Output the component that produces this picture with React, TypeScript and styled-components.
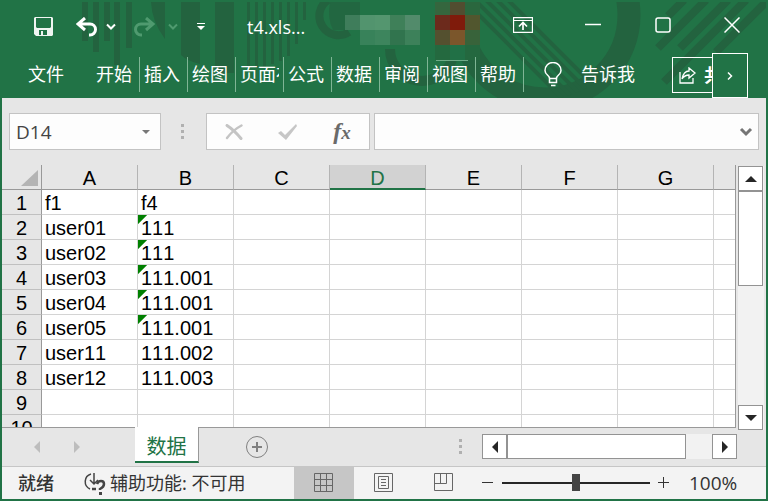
import React from "react";
import styled, { createGlobalStyle } from "styled-components";

const GREEN = "#217346";
const UI = `"Open Sans", "Noto Sans CJK SC", sans-serif`;
const CJK = `"Noto Sans", "Noto Sans CJK SC", sans-serif`;

const Global = createGlobalStyle`
  * { box-sizing: border-box; }
  body { margin: 0; background: #e6e6e6; }
  button, input { font: inherit; color: inherit; padding: 0; margin: 0; border: 0; background: none; }
  button { cursor: pointer; }
`;

const Window = styled.main`
  display: flex;
  flex-direction: column;
  height: 100vh;
  border: 2px solid ${GREEN};
  border-top: 0;
  background: #e6e6e6;
  font-family: ${CJK};
  overflow: hidden;
`;

const Header = styled.header`
  position: relative;
  flex: none;
  background: ${GREEN};
  color: #fff;
  overflow: hidden;
`;

const Pattern = styled.svg`
  position: absolute;
  left: -2px;
  top: 0;
`;

const TitleBar = styled.div`
  position: relative;
  display: flex;
  align-items: center;
  height: 53px;
  padding-left: 31px;
`;

const IconButton = styled.button<{ $w: number; $gap?: number; $faded?: boolean }>`
  display: flex;
  align-items: center;
  justify-content: center;
  flex: none;
  width: ${(p) => p.$w}px;
  height: 32px;
  margin-left: ${(p) => p.$gap ?? 0}px;
  color: ${(p) => (p.$faded ? "#4f9a6f" : "#fff")};
`;

const Title = styled.h1`
  flex: 1;
  margin: 0 0 0 23px;
  padding-top: 1px;
  font: 400 18px/24px ${UI};
  white-space: nowrap;
`;

const WindowButtons = styled.div`
  display: flex;
  align-self: flex-start;
  padding-top: 9px;
`;

const Ribbon = styled.nav`
  position: relative;
  display: flex;
  align-items: flex-start;
  height: 45px;
  padding-top: 4px;
  font-size: 18px;
  line-height: 35px;
`;

const FileTab = styled.button`
  width: 90px;
  height: 35px;
  padding-right: 2px;
  text-align: center;
`;

const RibbonTab = styled.button<{ $current?: boolean }>`
  flex: none;
  width: 48px;
  height: 35px;
  padding: 0 4px;
  border-right: 1px solid #7fb595;
  background: ${(p) =>
    p.$current ? "linear-gradient(#6fab88, #6fab88) 8px 3px / 32px 1px no-repeat" : "none"};
  overflow: hidden;
  white-space: nowrap;
  text-align: left;
`;

const ClipText = styled.span`
  display: block;
  overflow: hidden;
`;

const TellMe = styled.button`
  display: flex;
  align-items: center;
  gap: 19px;
  height: 35px;
  margin-left: 20px;
  white-space: nowrap;
`;

const ShareGroup = styled.div`
  display: flex;
  align-items: flex-start;
  margin: -4px 18px 0 auto;
`;

const Share = styled.button`
  display: flex;
  align-items: center;
  justify-content: flex-start;
  gap: 7px;
  width: 40px;
  height: 36px;
  margin-top: 4px;
  padding-left: 6px;
  border: 1px solid #fff;
  border-right: 0;
  overflow: hidden;
  white-space: nowrap;
  font-weight: 700;

  & > * {
    flex: none;
  }
`;

const More = styled.button`
  display: flex;
  align-items: center;
  justify-content: center;
  width: 36px;
  height: 45px;
  border: 1px solid #fff;
`;

const FormulaBar = styled.div`
  display: flex;
  align-items: center;
  flex: none;
  height: 67px;
  padding: 0 7px;
`;

const Box = styled.div`
  display: flex;
  align-items: center;
  height: 37px;
  border: 1px solid #c3c3c3;
  background: #fdfdfd;
`;

const NameBox = styled(Box)`
  width: 152px;
`;

const NameInput = styled.input`
  width: 127px;
  height: 35px;
  padding-left: 6px;
  color: #444;
  font: 400 19px/24px ${UI};
`;

const Grip = styled.svg`
  flex: none;
`;

const Functions = styled(Box)`
  width: 164px;
  margin-right: 4px;
`;

const Fx = styled.span`
  color: #6a6a6a;
  font: italic 700 24px/32px "Liberation Serif", "Times New Roman", serif;

  small {
    font-size: 19px;
  }
`;

const FormulaBox = styled(Box)`
  flex: 1;
`;

const FormulaInput = styled.input`
  flex: 1;
  min-width: 0;
  height: 35px;
`;

const Body = styled.div`
  display: grid;
  grid-template-columns: minmax(0, 1fr) 30px;
  flex: 1;
  min-height: 0;
`;

const Sheet = styled.div`
  overflow: hidden;
  border-bottom: 1px solid #999;
  border-right: 1px solid #999;
  background: linear-gradient(#e6e6e6 24px, #fff 24px);
`;

const Table = styled.table`
  width: 100%;
  table-layout: fixed;
  border-collapse: separate;
  border-spacing: 0;
  font: 400 20px/22px "Liberation Sans", Arial, sans-serif;
  font-kerning: none;
  color: #000;
`;

const Corner = styled.th`
  width: 40px;
  height: 25px;
  padding: 0;
  border-bottom: 1px solid #999;
  border-right: 1px solid #999;
  background: #e6e6e6;
`;

const ColHead = styled.th<{ $active?: boolean; $last?: boolean }>`
  width: ${(p) => (p.$last ? "auto" : "96px")};
  height: 25px;
  padding: ${(p) => (p.$active ? 3 : 2)}px 0 0;
  font-weight: 400;
  line-height: ${(p) => (p.$active ? 20 : 22)}px;
  color: ${(p) => (p.$active ? GREEN : "#000")};
  background: ${(p) => (p.$active ? "#d2d2d2" : "#e6e6e6")};
  border-bottom: ${(p) => (p.$active ? `2px solid ${GREEN}` : "1px solid #999")};
  border-right: ${(p) => (p.$last ? "0" : "1px solid #b4b4b4")};
`;

const RowHead = styled.th`
  height: 25px;
  padding: 2px 0 0;
  font-weight: 400;
  background: #e6e6e6;
  border-right: 1px solid #999;
  border-bottom: 1px solid #c0c0c0;
`;

const Cell = styled.td<{ $flag?: boolean }>`
  height: 25px;
  padding: 2px 3px 0;
  white-space: nowrap;
  border-right: 1px solid #d4d4d4;
  border-bottom: 1px solid #d4d4d4;
  background: ${(p) =>
    p.$flag ? "linear-gradient(135deg, #008000 6px, #fff 7px)" : "#fff"};

  &:last-child {
    border-right: 0;
  }
`;

const VScroll = styled.div`
  display: flex;
  flex-direction: column;
  width: 26px;
  margin: 1px 0 -2px 2px;
  background: #f2f2f2;
`;

const ScrollButton = styled.button`
  display: flex;
  align-items: center;
  justify-content: center;
  flex: none;
  width: 25px;
  height: 25px;
  border: 1px solid #939393;
  background: #fff;
`;

const VThumb = styled.div`
  width: 25px;
  height: 95px;
  margin-bottom: auto;
  border: 1px solid #939393;
  background: #fff;
`;

const SheetBar = styled.div`
  display: flex;
  align-items: flex-start;
  flex: none;
  height: 39px;
  border-bottom: 1px solid #c6c6c6;
`;

const SheetNav = styled.div`
  display: flex;
  align-items: center;
  gap: 28px;
  width: 133px;
  height: 38px;
  padding-left: 29px;
`;

const NavButton = styled.button`
  display: flex;
`;

const SheetTab = styled.button`
  width: 64px;
  height: 36px;
  margin-top: -1px;
  padding-top: 5px;
  border-right: 1px solid #999;
  border-bottom: 2px solid ${GREEN};
  background: #fff;
  color: ${GREEN};
  font-size: 20px;
  line-height: 28px;
  z-index: 1;
`;

const AddSheet = styled.button`
  display: flex;
  margin: 7px auto 0 46px;
`;

const HScroll = styled.div`
  display: flex;
  width: 255px;
  height: 25px;
  margin: 6px 29px 0 20px;
  background: #f2f2f2;
`;

const HThumb = styled.div`
  width: 179px;
  margin-right: auto;
  border: 1px solid #939393;
  background: #fff;
`;

const StatusBar = styled.footer`
  display: flex;
  align-items: center;
  flex: none;
  height: 32px;
  background: #f3f3f3;
  color: #333;
  font-size: 18px;
  line-height: 32px;
  white-space: nowrap;
`;

const Ready = styled.span`
  width: 82px;
  padding-left: 16px;
  font-weight: 500;
`;

const Accessibility = styled.button`
  display: flex;
  align-items: center;
  gap: 3px;
  height: 32px;
`;

const Views = styled.div`
  display: flex;
  margin: 0 8px 0 auto;
`;

const ViewButton = styled.button<{ $on?: boolean }>`
  display: flex;
  align-items: center;
  justify-content: center;
  width: 60px;
  height: 32px;
  background: ${(p) => (p.$on ? "#c6c6c6" : "transparent")};
`;

const ZoomButton = styled.button`
  display: flex;
  width: 12px;
`;

const ZoomRange = styled.input`
  appearance: none;
  width: 148px;
  height: 18px;
  margin: 0 8px;

  &::-webkit-slider-runnable-track {
    height: 2px;
    background: #262626;
  }
  &::-webkit-slider-thumb {
    appearance: none;
    width: 8px;
    height: 17px;
    margin-top: -8px;
    background: #444;
  }
`;

const Percent = styled.output`
  width: 77px;
  margin-left: 19px;
  font: 400 19px/32px ${UI};
`;

const tabs = ["开始", "插入", "绘图", "页面布局", "公式", "数据", "审阅", "视图", "帮助"];
const columns = ["A", "B", "C", "D", "E", "F", "G", ""];
const rows: string[][] = [
  ["f1", "f4"],
  ["user01", "111"],
  ["user02", "111"],
  ["user03", "111.001"],
  ["user04", "111.001"],
  ["user05", "111.001"],
  ["user11", "111.002"],
  ["user12", "111.003"],
  [],
  [],
];
const isTextNumber = (row: number, col: number) => col === 1 && row >= 1 && row <= 5;

const mosaic: [number, number, string][] = [
  [345, 15, "#3f7d5b"], [360, 15, "#52946e"], [375, 15, "#54966f"], [390, 15, "#3f8059"], [405, 15, "#528b6b"],
  [360, 30, "#38825a"], [375, 30, "#3d855d"], [390, 30, "#31744e"], [405, 30, "#3d815a"],
  [435, 0, "#35663e"], [450, 0, "#514d30"], [465, 0, "#2a673e"],
  [435, 15, "#6c2a1c"], [450, 15, "#7f1b0b"], [465, 15, "#51562e"],
  [435, 30, "#54502f"], [450, 30, "#7b562b"], [465, 30, "#38633a"],
  [435, 45, "#24693f"], [450, 45, "#217046"], [465, 45, "#24683f"],
];

function HeaderPattern() {
  return (
    <Pattern width="768" height="98" viewBox="0 0 768 98" aria-hidden="true">
      <clipPath id="below-edge"><rect x="0" y="2" width="766" height="96" /></clipPath>
      <clipPath id="disc"><circle cx="545" cy="15" r="84" /></clipPath>
      <g clipPath="url(#below-edge)">
        <g fill="#23633f">
          <path d="M82 2h6v39h-6zM93 2h6v50h-6zM104 2h6v39h-6zM114 2h6v63h-6zM126 2h6v46h-6z" />
          <path d="M151 2h14v37Q152 22 151 2zM181 2h19v62Q187 61 181 55zM215 2h19v71h-16l-3-1z" />
          <path d="M247 2h3v66h-3zM255 2h3v66h-3zM263 2h3v65h-3zM271 2h3v62h-3zM279 2h3v59h-3zM287 2h3v54h-3zM295 2h3v42h-3zM303 2h3v18h-3z" />
          <path d="M330 2h30v13h-15v15h-12q-6-12-3-28z" opacity=".7" />
        </g>
        <g fill="none" stroke="#23633f">
          <path d="M328 0A19 19 0 0 0 349 32" strokeWidth="8" />
          <path d="M390 49A32 32 0 0 0 452 60" strokeWidth="10" />
          <circle cx="545" cy="15" r="84" strokeWidth="23" />
          <path clipPath="url(#disc)" d="M454 -10l110 110M465 -10l110 110M476 -10l110 110M487 -10l110 110M498 -10l110 110" strokeWidth="4" />
          <path d="M668 16L684 0M658 48L706 0M680 48L728 0M664 82L746 0M716 52L768 0" strokeWidth="8" />
        </g>
      </g>
      {mosaic.map(([x, y, c]) => (
        <rect key={`${x}-${y}`} x={x} y={y || 2} width="15" height={y ? 15 : 13} fill={c} />
      ))}
    </Pattern>
  );
}

const stroke = { fill: "none", stroke: "currentColor" } as const;

const Chevron = () => (
  <svg width="10" height="8" viewBox="0 0 10 8" {...stroke} strokeWidth="2"><path d="M1 1.5l4 4 4-4" /></svg>
);

const Arrow = ({ d, color = "#262626" }: { d: "up" | "down" | "left" | "right"; color?: string }) => {
  const paths = { up: "M0 9L6 3L12 9z", down: "M0 3L6 9L12 3z", left: "M9 0L3 6L9 12z", right: "M3 0L9 6L3 12z" };
  return <svg width="12" height="12" viewBox="0 0 12 12"><path d={paths[d]} fill={color} /></svg>;
};

const GripDots = ({ width }: { width: number }) => (
  <Grip width={width} height="16" viewBox={`0 0 ${width} 16`} fill="#b0b0b0" aria-hidden="true">
    {[0, 6, 12].map((y) => <rect key={y} x={Math.floor(width / 2) - 2} y={y} width="3" height="3" />)}
  </Grip>
);

export default function App() {
  return (
    <>
      <Global />
      <Window>
        <Header>
          <HeaderPattern />
          <TitleBar>
            <IconButton $w={21} aria-label="保存">
              <svg width="20" height="20" viewBox="0 0 20 20">
                <path fill="#f0f5f2" fillRule="evenodd" d="M1 0h17l1 1v17l-1 1H2l-2-2V1zM2 1v9l1 1h13l1-1V1zM5 13v5h2v-4h2v4h4v-5z" />
              </svg>
            </IconButton>
            <IconButton $w={22} $gap={22} aria-label="撤消">
              <svg width="22" height="20" viewBox="0 0 22 20" {...stroke} strokeWidth="3"><path d="M9 1L2 7l7 6M2 7h12a5.500 5.500 0 0 1 0 11h-1" /></svg>
            </IconButton>
            <IconButton $w={18} $gap={4} aria-label="撤消选项"><Chevron /></IconButton>
            <IconButton $w={48} $faded aria-label="恢复">
              <svg width="22" height="20" viewBox="0 0 22 20" {...stroke} strokeWidth="3"><path d="M13 1l7 6-7 6M20 7H8a5.500 5.500 0 0 0 0 11h1" /></svg>
            </IconButton>
            <IconButton $w={10} $faded aria-label="恢复选项"><Chevron /></IconButton>
            <IconButton $w={46} aria-label="自定义快速访问工具栏">
              <svg width="8" height="8" viewBox="0 0 8 8" fill="#fff"><path d="M0 0h8v1H0zM0 3h8L4 7z" /></svg>
            </IconButton>
            <Title>t4.xls...</Title>
            <WindowButtons>
              <IconButton $w={70} aria-label="功能区显示选项">
                <svg width="20" height="16" viewBox="0 0 20 16" {...stroke}>
                  <path d="M.5.5h19v15H.5z" strokeWidth="1.300" /><path d="M1 3.500h18" /><path d="M10 13V6M6 9.500l4-4 4 4" strokeWidth="1.700" />
                </svg>
              </IconButton>
              <IconButton $w={70} aria-label="最小化">
                <svg width="16" height="16" viewBox="0 0 16 16" {...stroke}><path d="M0 7.500h16" strokeWidth="1.500" /></svg>
              </IconButton>
              <IconButton $w={69} aria-label="最大化">
                <svg width="16" height="16" viewBox="0 0 16 16" {...stroke}><rect x="1" y="1" width="14" height="14" rx="2" strokeWidth="1.500" /></svg>
              </IconButton>
              <IconButton $w={69} aria-label="关闭">
                <svg width="16" height="16" viewBox="0 0 16 16" {...stroke}><path d="M0.500 0.500l15 15M15.500 0.500l-15 15" strokeWidth="1.500" /></svg>
              </IconButton>
            </WindowButtons>
          </TitleBar>
          <Ribbon>
            <FileTab>文件</FileTab>
            {tabs.map((t) => <RibbonTab key={t} $current={t === "视图"}><ClipText>{t}</ClipText></RibbonTab>)}
            <TellMe>
              <svg width="18" height="25" viewBox="0 0 18 25" {...stroke} strokeWidth="1.500">
                <path d="M5.500 16.500C5.500 13 1 13 1 8.500a8 8 0 0 1 16 0C17 13 12.500 13 12.500 16.500zM5.500 16.500v4h7v-4M7 23.500h4.500" />
              </svg>
              告诉我
            </TellMe>
            <ShareGroup>
              <Share aria-label="共享">
                <svg width="18" height="17" viewBox="0 0 18 17" {...stroke} strokeWidth="1.300">
                  <path d="M1 5v11h13v-5M10 1l6 5-6 5V8C7 8 5 9 3 12 4 7 6 4 10 4z" />
                </svg>
                <span>共享</span>
              </Share>
              <More aria-label="更多">
                <svg width="6" height="8" viewBox="0 0 6 8" {...stroke} strokeWidth="1.500"><path d="M1 0.500L4.500 4L1 7.500" /></svg>
              </More>
            </ShareGroup>
          </Ribbon>
        </Header>

        <FormulaBar>
          <NameBox>
            <NameInput aria-label="名称框" defaultValue="D14" />
            <NavButton aria-label="名称列表">
              <svg width="18" height="6" viewBox="0 0 18 6"><path d="M5 1h8L9 5z" fill="#777" /></svg>
            </NavButton>
          </NameBox>
          <GripDots width={45} />
          <Functions>
            <IconButton $w={54} aria-label="取消">
              <svg width="18" height="16" viewBox="0 0 18 16" fill="none" stroke="#c4c4c4" strokeLinecap="round">
                <path d="M2 1.500Q9 6 16 14.500" strokeWidth="3" /><path d="M16.500 1.500Q8 6 2 14" strokeWidth="2.400" />
              </svg>
            </IconButton>
            <IconButton $w={54} aria-label="输入">
              <svg width="20" height="16" viewBox="0 0 20 16" fill="#c6c6c6"><path d="M0 9l3-2 4 4L18 0l1 2L8 16z" /></svg>
            </IconButton>
            <IconButton $w={54} aria-label="插入函数">
              <Fx>f<small>x</small></Fx>
            </IconButton>
          </Functions>
          <FormulaBox>
            <FormulaInput aria-label="编辑栏" />
            <NavButton aria-label="展开编辑栏">
              <svg width="20" height="10" viewBox="0 0 20 10" fill="none" stroke="#757575" strokeWidth="3"><path d="M3 2l5 5 5-5" /></svg>
            </NavButton>
          </FormulaBox>
        </FormulaBar>

        <Body>
          <Sheet>
            <Table>
              <thead>
                <tr>
                  <Corner aria-label="全选">
                    <svg width="39" height="22" viewBox="0 0 39 22" display="block"><path d="M19 20h17V4z" fill="#b4b4b4" /></svg>
                  </Corner>
                  {columns.map((c) => <ColHead key={c} scope="col" $active={c === "D"} $last={c === ""}>{c}</ColHead>)}
                </tr>
              </thead>
              <tbody>
                {rows.map((r, i) => (
                  <tr key={i}>
                    <RowHead scope="row">{i + 1}</RowHead>
                    {columns.map((c, j) => <Cell key={c} $flag={isTextNumber(i, j)}>{r[j]}</Cell>)}
                  </tr>
                ))}
              </tbody>
            </Table>
          </Sheet>
          <VScroll>
            <ScrollButton aria-label="向上滚动"><Arrow d="up" /></ScrollButton>
            <VThumb />
            <ScrollButton aria-label="向下滚动"><Arrow d="down" /></ScrollButton>
          </VScroll>
        </Body>

        <SheetBar>
          <SheetNav>
            <NavButton aria-label="上一张工作表"><Arrow d="left" color="#bdbdbd" /></NavButton>
            <NavButton aria-label="下一张工作表"><Arrow d="right" color="#bdbdbd" /></NavButton>
          </SheetNav>
          <SheetTab>数据</SheetTab>
          <AddSheet aria-label="新工作表">
            <svg width="24" height="24" viewBox="0 0 24 24" fill="none" stroke="#808080">
              <circle cx="12" cy="12" r="10.500" /><path d="M12 7v10M7 12h10" strokeWidth="2" />
            </svg>
          </AddSheet>
          <svg width="3" height="28" viewBox="0 0 3 28" fill="#b0b0b0"><path d="M0 11h3v3H0zM0 17h3v3H0zM0 23h3v3H0z" /></svg>
          <HScroll>
            <ScrollButton aria-label="向左滚动"><Arrow d="left" /></ScrollButton>
            <HThumb />
            <ScrollButton aria-label="向右滚动"><Arrow d="right" /></ScrollButton>
          </HScroll>
        </SheetBar>

        <StatusBar>
          <Ready>就绪</Ready>
          <Accessibility>
            <svg width="23" height="24" viewBox="0 0 23 24" fill="none" stroke="#444">
              <path d="M7 3A8 8 0 0 0 6 18M10 2v10M6 9l4 4 4-4" strokeWidth="1.500" />
              <path d="M8 18h4M13 13q1-3 4-3t3 3-4 5v1" strokeWidth="2.500" /><path d="M15 21h3v3h-3z" fill="#444" stroke="none" />
            </svg>
            辅助功能: 不可用
          </Accessibility>
          <Views>
            <ViewButton $on aria-label="普通">
              <svg width="20" height="20" viewBox="0 0 20 20" fill="none" stroke="#666"><path d="M.5.5h18v18H.5zM6.500.5v18M12.500.5v18M.5 6.500h18M.5 12.500h18" /></svg>
            </ViewButton>
            <ViewButton aria-label="页面布局视图">
              <svg width="20" height="20" viewBox="0 0 20 20" fill="none" stroke="#666"><path d="M.5.5h18v18H.5zM4.500 3.500h10v12h-10zM7 6.500h5M7 9.500h5M7 12.500h5" /></svg>
            </ViewButton>
            <ViewButton aria-label="分页预览">
              <svg width="20" height="20" viewBox="0 0 20 20" fill="none" stroke="#666"><path d="M.5.5h18v17H.5zM.5 10.500h12M6.500.5v10M12.500.5v10" /></svg>
            </ViewButton>
          </Views>
          <ZoomButton aria-label="缩小"><svg width="12" height="12" viewBox="0 0 12 12" stroke="#333"><path d="M0 5.500h11" /></svg></ZoomButton>
          <ZoomRange type="range" aria-label="缩放" min="10" max="190" defaultValue="100" />
          <ZoomButton aria-label="放大"><svg width="12" height="12" viewBox="0 0 12 12" stroke="#333"><path d="M0 5.500h11M5.500 0v11" /></svg></ZoomButton>
          <Percent>100%</Percent>
        </StatusBar>
      </Window>
    </>
  );
}
